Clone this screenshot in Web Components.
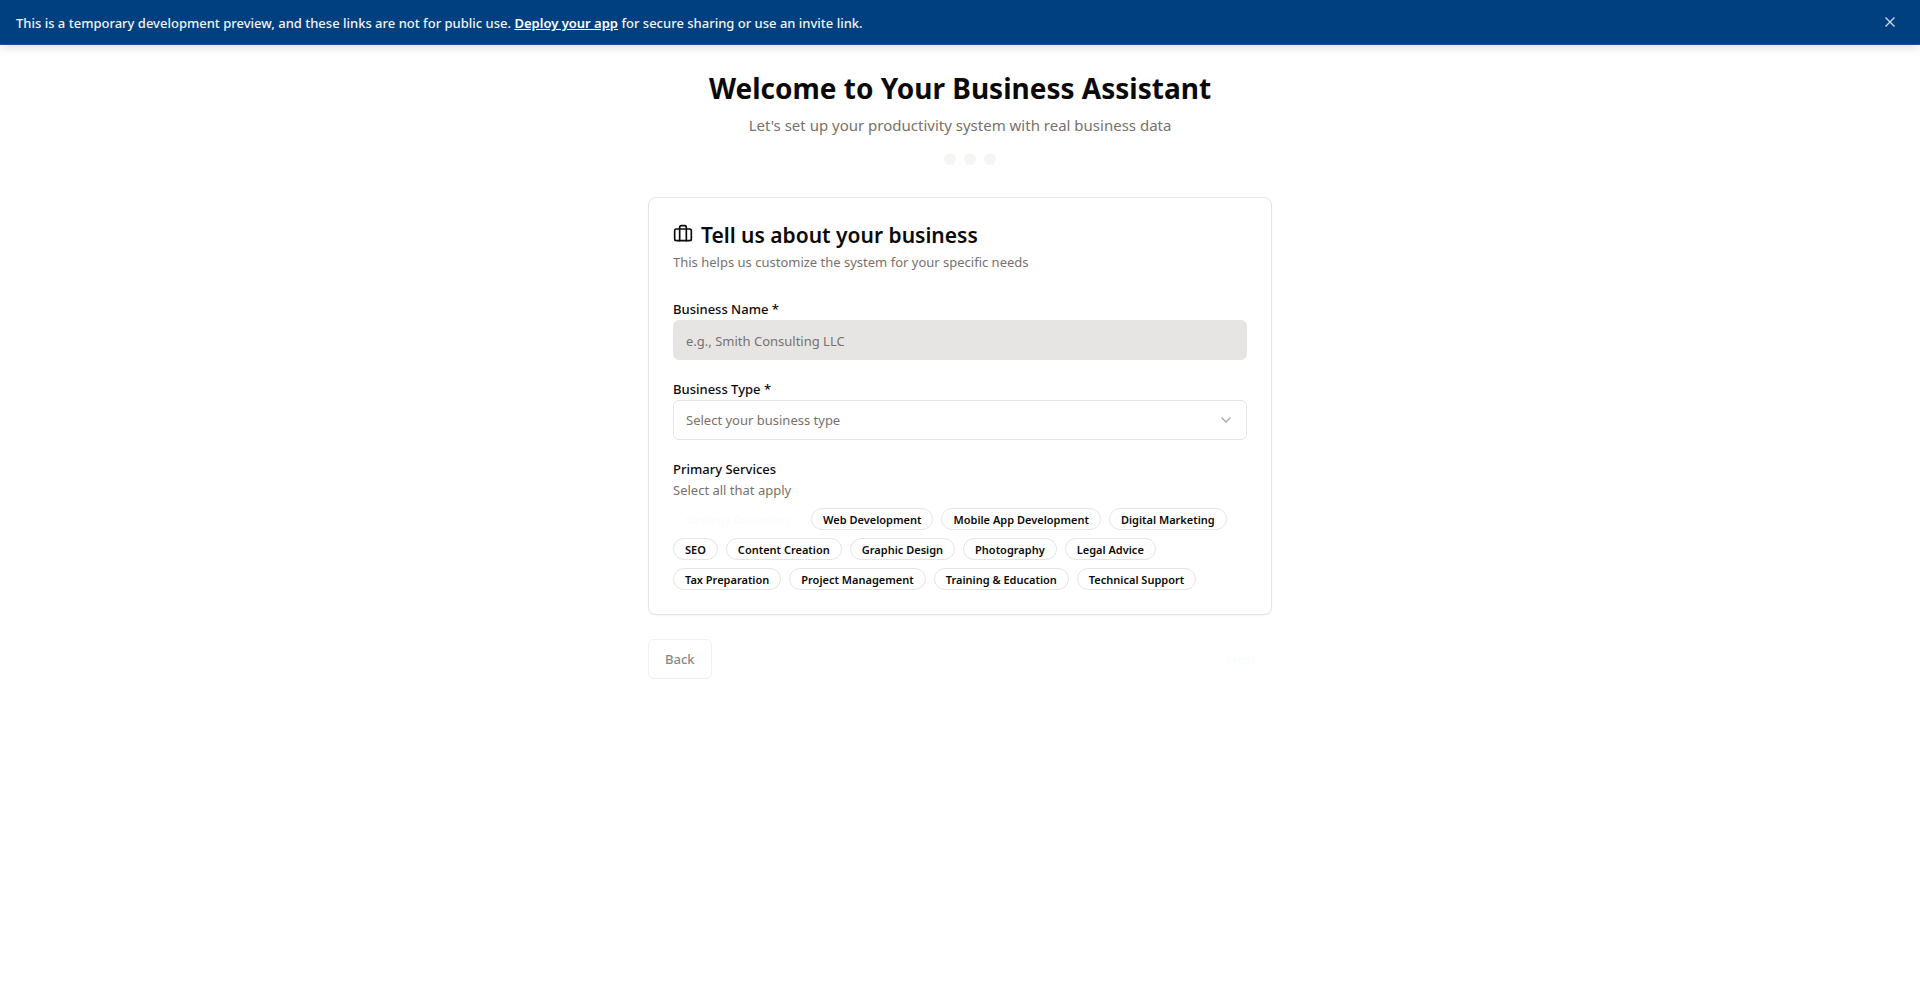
<!DOCTYPE html>
<html lang="en">
<head>
<meta charset="utf-8">
<meta name="viewport" content="width=device-width, initial-scale=1">
<title>Business Assistant</title>
<style>
  body {
    margin: 0;
    background: #fff;
    color: #0c0a09;
    font: 400 13px/20px "Noto Sans", "Open Sans", sans-serif;
    --muted: #78716c;
    --line: #e5e5e5;
    --faint: #fafcff;
  }
</style>
</head>
<body>
<preview-banner>This is a temporary development preview, and these links are not for public use. <a slot="link" href="#deploy">Deploy your app</a><span slot="rest"> for secure sharing or use an invite link.</span></preview-banner>
<onboarding-page>
  <h1 slot="title">Welcome to Your Business Assistant</h1>
  <p slot="subtitle">Let's set up your productivity system with real business data</p>
  <step-dots slot="steps"></step-dots>
  <form-card>
    <span slot="title">Tell us about your business</span>
    <span slot="description">This helps us customize the system for your specific needs</span>
    <text-field label="Business Name *" placeholder="e.g., Smith Consulting LLC"></text-field>
    <select-field label="Business Type *" placeholder="Select your business type"></select-field>
    <service-picker label="Primary Services" hint="Select all that apply"></service-picker>
  </form-card>
  <step-actions></step-actions>
</onboarding-page>

<script>
class Base extends HTMLElement {
  constructor() {
    super();
    this.attachShadow({ mode: 'open' }).innerHTML = this.template();
  }
}

customElements.define('preview-banner', class extends Base {
  template() {
    return `<style>
      :host { display: flex; align-items: center; justify-content: space-between; box-sizing: border-box; min-height: 45px; padding: 0 22px 0 16px;
        background: #004080; border-bottom: 1px solid #1a5490; color: #f0f4f8; font-weight: 500; box-shadow: 0 2px 10px rgba(0,0,0,.14); }
      p { margin: 0; padding-top: 2px; white-space: pre-wrap; }
      ::slotted(a) { color: #fff; font-weight: 600; text-decoration: underline; }
      button { display: flex; padding: 0; border: 0; background: none; color: #cbd9e7; cursor: pointer; }
    </style>
    <p><slot></slot><slot name="link"></slot><slot name="rest"></slot></p>
    <button type="button" aria-label="Close"><svg width="16" height="16" viewBox="0 0 16 16" fill="none" stroke="currentColor" stroke-width="1.4"><path d="M3.5 3.5l9 9M12.5 3.5l-9 9"/></svg></button>`;
  }
});

customElements.define('onboarding-page', class extends Base {
  template() {
    return `<style>
      :host { display: block; max-width: 624px; margin: 0 auto; padding: 24px; }
      header { text-align: center; margin-bottom: 32px; }
      ::slotted(h1) { margin: 0 0 6px; font-size: 28px; line-height: 38px; font-weight: 700; }
      ::slotted(p) { margin: 0 0 16px; font-size: 15px; line-height: 24px; color: var(--muted); }
    </style>
    <header><slot name="title"></slot><slot name="subtitle"></slot><slot name="steps"></slot></header>
    <main><slot></slot></main>`;
  }
});

customElements.define('step-dots', class extends Base {
  template() {
    return `<style>
      :host { display: flex; justify-content: center; gap: 8px; }
      i { width: 12px; height: 12px; border-radius: 50%; background: #f5f5f4; }
      i.current { background: transparent; }
    </style><i class="current"></i><i></i><i></i><i></i>`;
  }
});

customElements.define('form-card', class extends Base {
  template() {
    return `<style>
      :host { display: block; padding: 24px; border: 1px solid var(--line); border-radius: 8px; background: #fff; box-shadow: 0 1px 2px rgba(0,0,0,.05); }
      header { margin-bottom: 28px; }
      h2 { display: flex; align-items: flex-start; gap: 8px; margin: 0 0 4px; font-size: 21px; line-height: 26px; font-weight: 600; }
      svg { flex: none; padding-top: 2px; }
      p { margin: 0; color: var(--muted); }
      .fields { display: grid; gap: 20px; }
    </style>
    <header>
      <h2><svg width="20" height="20" viewBox="0 0 24 24" fill="none" stroke="currentColor" stroke-width="2" stroke-linecap="round" stroke-linejoin="round" aria-hidden="true"><path d="M16 20V4a2 2 0 0 0-2-2h-4a2 2 0 0 0-2 2v16"/><rect width="20" height="14" x="2" y="6" rx="2"/></svg><slot name="title"></slot></h2>
      <p><slot name="description"></slot></p>
    </header>
    <div class="fields"><slot></slot></div>`;
  }
});

const fieldStyles = `
  :host { display: block; }
  label { display: block; margin-bottom: 2px; line-height: 18px; font-weight: 500; }
  input, select { display: block; box-sizing: border-box; width: 100%; height: 40px; padding: 0 12px; border: 1px solid var(--line);
    border-radius: 6px; font: inherit; color: var(--muted); outline: 0; }`;

customElements.define('text-field', class extends Base {
  template() {
    return `<style>${fieldStyles}
      input { background: #e7e5e4; border-color: #e7e5e4; padding-top: 2px; }
      input::placeholder { color: var(--muted); opacity: 1; }
    </style>
    <label for="field">${this.getAttribute('label')}</label>
    <input id="field" type="text" placeholder="${this.getAttribute('placeholder')}">`;
  }
});

customElements.define('select-field', class extends Base {
  template() {
    return `<style>${fieldStyles}
      .box { display: grid; align-items: center; }
      .box > * { grid-area: 1 / 1; }
      select { appearance: none; background: #fff; }
      svg { justify-self: end; margin-right: 13px; opacity: .5; pointer-events: none; }
    </style>
    <label for="field">${this.getAttribute('label')}</label>
    <div class="box">
      <select id="field"><option>${this.getAttribute('placeholder')}</option></select>
      <svg width="16" height="16" viewBox="0 0 24 24" fill="none" stroke="#57534e" stroke-width="2" stroke-linecap="round" stroke-linejoin="round" aria-hidden="true"><path d="m6 9 6 6 6-6"/></svg>
    </div>`;
  }
});

customElements.define('service-picker', class extends Base {
  template() {
    const services = ['Strategy Consulting', 'Web Development', 'Mobile App Development', 'Digital Marketing', 'SEO',
      'Content Creation', 'Graphic Design', 'Photography', 'Legal Advice', 'Tax Preparation', 'Project Management',
      'Training &amp; Education', 'Technical Support'];
    return `<style>
      :host { display: block; }
      h3 { margin: 0 0 2px; font-size: 13px; line-height: 18px; font-weight: 500; }
      p { margin: 0; color: var(--muted); }
      .chips { display: flex; flex-wrap: wrap; gap: 8px; margin-top: 8px; }
      button { height: 22px; padding: 1px 11px 0; border: 1px solid var(--line); border-radius: 11px; background: #fff; color: inherit;
        font: inherit; font-size: 11px; font-weight: 600; cursor: pointer; }
      button[aria-pressed="true"] { border-color: transparent; background: transparent; color: var(--faint); }
    </style>
    <h3 id="name">${this.getAttribute('label')}</h3>
    <p>${this.getAttribute('hint')}</p>
    <div class="chips" role="group" aria-labelledby="name">
      ${services.map((s, i) => `<button type="button" aria-pressed="${i === 0}">${s}</button>`).join('')}
    </div>`;
  }
});

customElements.define('step-actions', class extends Base {
  template() {
    return `<style>
      :host { display: flex; justify-content: space-between; margin-top: 24px; }
      button { height: 40px; padding: 0 16px; border: 1px solid var(--line); border-radius: 6px; background: #fff; color: inherit;
        font: inherit; font-weight: 500; }
      button:disabled { opacity: .5; }
      .next { border-color: transparent; background: transparent; color: var(--faint); padding: 0 15px; }
    </style>
    <button type="button" disabled>Back</button>
    <button type="button" class="next">Next</button>`;
  }
});
</script>
</body>
</html>
